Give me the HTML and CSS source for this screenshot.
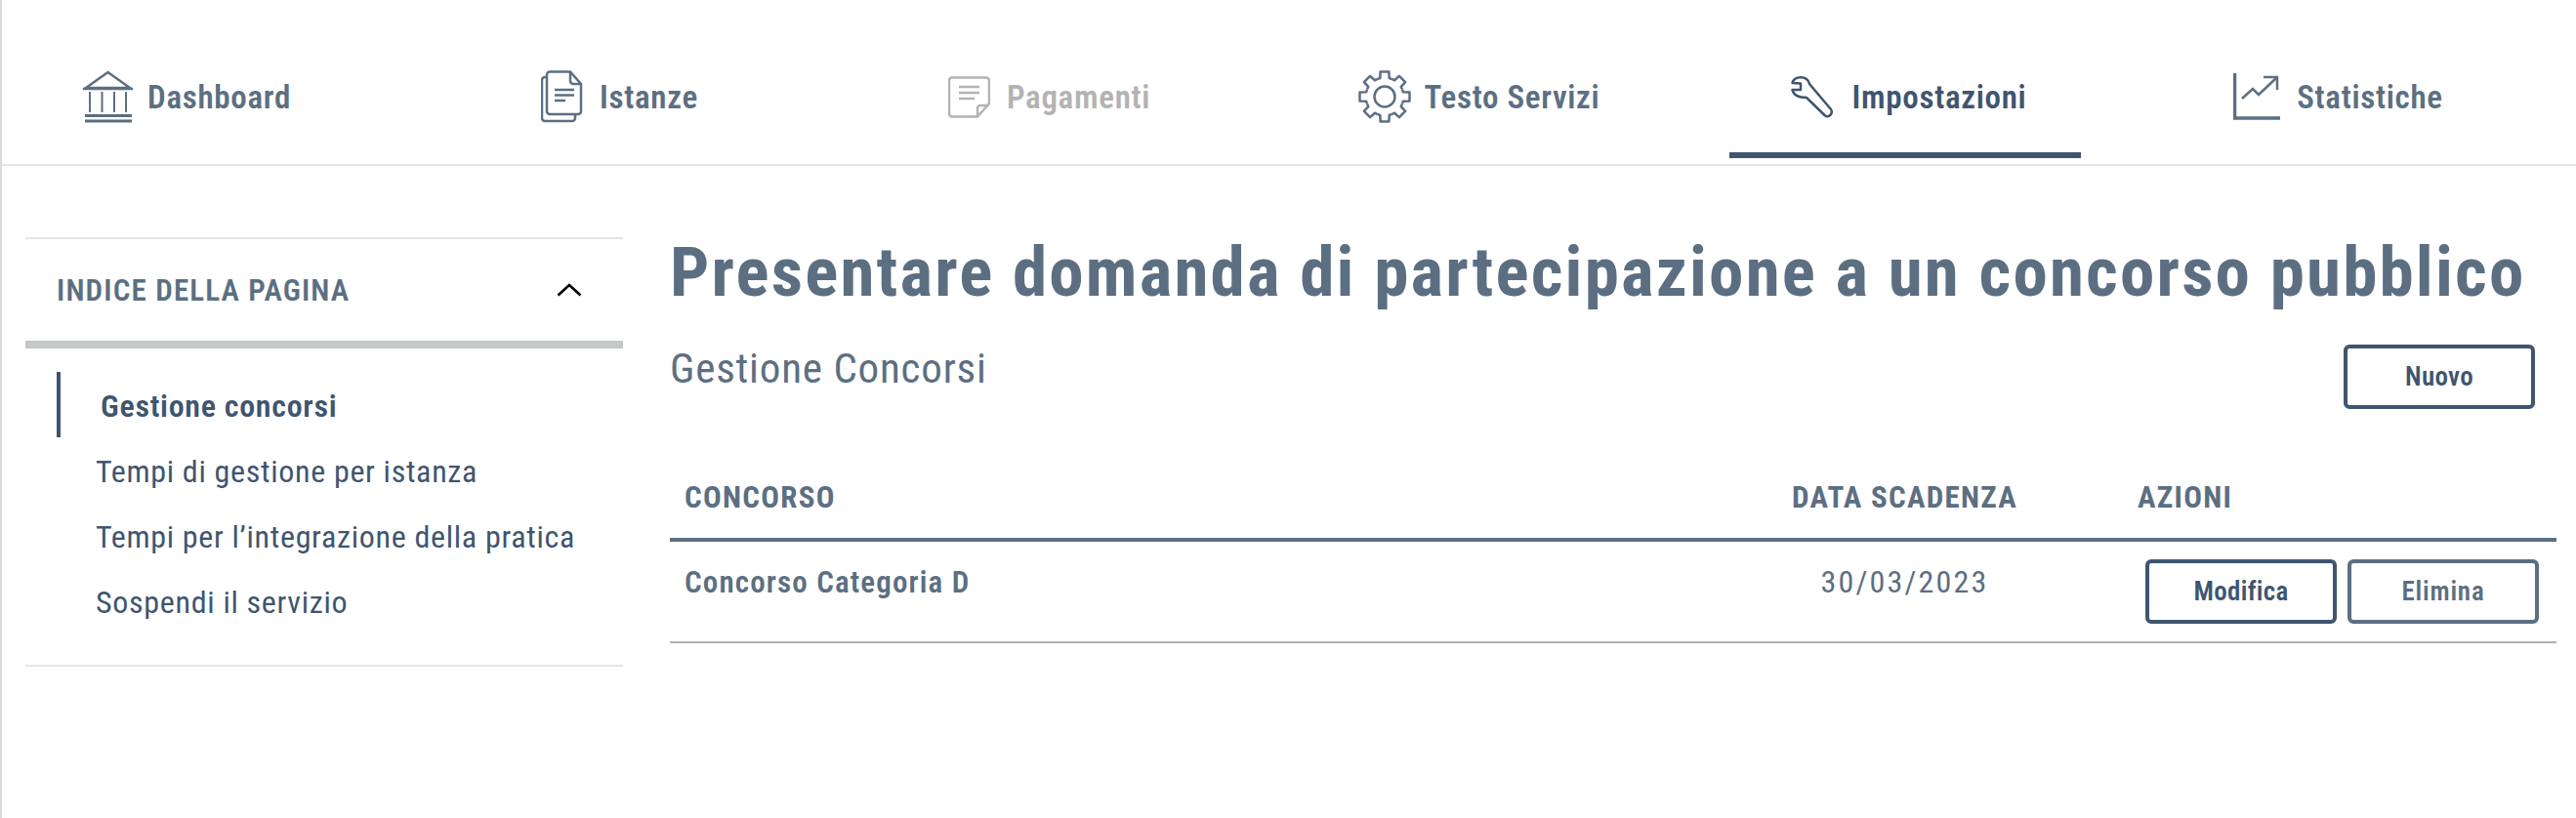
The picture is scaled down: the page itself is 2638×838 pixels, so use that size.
FILE: index.html
```html
<!DOCTYPE html>
<html lang="it">
<head>
<meta charset="utf-8">
<title>Impostazioni</title>
<link rel="stylesheet" href="styles.css">
</head>
<body>
<nav class="tabs">
  <a class="tab tab-first tab-gap-s">
    <svg class="icon" width="53" height="54" viewBox="0 0 53 54" fill="none" stroke="currentColor" stroke-width="2"><path d="M26.500 2 L49 18 H4 Z" stroke-width="2.500"/><path d="M1 19 H52" stroke-width="2.500"/><path d="M8 22 V43 M20.500 22 V43 M33 22 V43 M45 22 V43"/><path d="M3 46.500 H51 M3 52 H51" stroke-width="3"/></svg>
    <span>Dashboard</span>
  </a>
  <a class="tab tab-gap-m">
    <svg class="icon" width="43" height="54" viewBox="0 0 43 54" fill="none" stroke="currentColor" stroke-width="2.500"><path d="M9 1.500 H30 L41 14 V42 a3 3 0 0 1-3 3 H9 a3 3 0 0 1-3-3 V4.500 a3 3 0 0 1 3-3Z"/><path d="M30 1.500 V11 a3 3 0 0 0 3 3 H41"/><path d="M6 7 H4 a3 3 0 0 0-3 3 V49 a3 3 0 0 0 3 3 H32 a3 3 0 0 0 3-3 V45"/><path d="M14 20 H34 M14 25.500 H34 M14 31 H25"/></svg>
    <span>Istanze</span>
  </a>
  <a class="tab tab-off tab-gap-m">
    <svg class="icon" width="43" height="43" viewBox="0 0 43 43" fill="none" stroke="currentColor" stroke-width="2.500"><path d="M4 1.500 H39 a3 3 0 0 1 3 3 V28 L30 41.500 H4 a3 3 0 0 1-3-3 V4.500 a3 3 0 0 1 3-3Z"/><path d="M30 41 V33 a3 3 0 0 1 3-3 H42"/><path d="M11 11 H32 M11 17 H32 M11 23 H27"/></svg>
    <span>Pagamenti</span>
  </a>
  <a class="tab tab-gap-s">
    <svg class="icon" width="54" height="54" viewBox="-27 -27 54 54" fill="none" stroke="currentColor" stroke-width="2.500" stroke-linejoin="round"><defs><path id="tooth" d="M-7.460 -18.020 L-4.720 -18.920 L-4.400 -25.500 H4.400 L4.720 -18.920 L7.460 -18.020"/></defs><use href="#tooth"/><use href="#tooth" transform="rotate(45)"/><use href="#tooth" transform="rotate(90)"/><use href="#tooth" transform="rotate(135)"/><use href="#tooth" transform="rotate(180)"/><use href="#tooth" transform="rotate(225)"/><use href="#tooth" transform="rotate(270)"/><use href="#tooth" transform="rotate(315)"/><circle r="10.500"/></svg>
    <span>Testo Servizi</span>
  </a>
  <a class="tab tab-on tab-gap-l">
    <svg class="icon" width="43" height="43" viewBox="0 0 43 43" fill="none" stroke="currentColor" stroke-width="2.500" stroke-linejoin="round"><path d="M1.500 7 C2.500 3 6 1.300 10 1.300 C15 1.300 18 3.500 19 8 L41 34 C43.500 38.500 38.500 43.500 34.500 40 L16 22 C11 22 3 21 1.500 14 H10 V7.500 Z"/></svg>
    <span>Impostazioni</span>
  </a>
  <a class="tab tab-gap-m">
    <svg class="icon" width="48" height="48" viewBox="0 0 48 48" fill="none" stroke="currentColor" stroke-width="2.500"><path d="M1.500 0 V46 H48" stroke-width="3.500"/><path d="M9 26 L20 16 L26 22 L44 5"/><path d="M31 4 H45 V17"/></svg>
    <span>Statistiche</span>
  </a>
</nav>

<main class="page">
  <aside class="index">
    <header class="index-head">
      <span>INDICE DELLA PAGINA</span>
      <svg class="chevron" width="26" height="14" viewBox="0 0 26 14" fill="none" stroke="#000" stroke-width="2.600"><path d="M1.500 12.500 L13 2 L24.500 12.500"/></svg>
    </header>
    <ul class="index-list">
      <li class="index-item index-item-on">Gestione concorsi</li>
      <li class="index-item">Tempi di gestione per istanza</li>
      <li class="index-item">Tempi per l’integrazione della pratica</li>
      <li class="index-item">Sospendi il servizio</li>
    </ul>
  </aside>

  <section class="content">
    <h1 class="title">Presentare domanda di partecipazione a un concorso pubblico</h1>
    <div class="toolbar">
      <h2 class="subtitle">Gestione Concorsi</h2>
      <button class="btn btn-dark">Nuovo</button>
    </div>
    <div class="row row-head">
      <div class="cell-name">CONCORSO</div>
      <div class="cell-date">DATA SCADENZA</div>
      <div class="cell-head-actions">AZIONI</div>
    </div>
    <div class="row row-body">
      <div class="cell-name cell-strong">Concorso Categoria D</div>
      <div class="cell-date cell-light">30/03/2023</div>
      <div class="cell-actions">
        <button class="btn btn-dark">Modifica</button>
        <button class="btn btn-grey">Elimina</button>
      </div>
    </div>
  </section>
</main>
</body>
</html>
```
FILE: styles.css
```css
* { box-sizing: border-box; }
html, body { margin: 0; padding: 0; }
body {
  min-height: 838px;
  border-left: 2px solid #dcdcdc;
  background: #fff;
  font-family: "Roboto", "Liberation Sans", sans-serif;
  font-stretch: 75%;
  color: #5c6f82;
}
.tabs {
  display: grid;
  grid-template-columns: repeat(6, 360px);
  column-gap: 80px;
  height: 170px;
  padding-left: 9px;
  border-bottom: 2px solid #e3e4f0;
}
.tab {
  display: flex;
  align-items: center;
  justify-content: center;
  height: 162px;
  padding: 42px 0 0 7px;
  border-bottom: 6px solid transparent;
  font-size: 33px;
  letter-spacing: 0.7px;
  font-weight: 600;
  color: #5c6f82;
}
.tab-first { padding-left: 0; }
.tab-gap-s { gap: 14px; }
.tab-gap-m { gap: 17px; }
.tab-gap-l { gap: 20px; }
.tab-off { color: #b3b3b3; }
.tab-on { color: #3f5570; border-bottom-color: #3f5570; }
.icon { flex: none; }

.page {
  display: grid;
  grid-template-columns: 612px 1932px;
  column-gap: 48px;
  padding: 73px 0 0 24px;
}
.index { height: 440px; border-top: 2px solid #e6e6e6; border-bottom: 2px solid #e6e6e6; }
.index-head {
  display: flex;
  align-items: center;
  justify-content: space-between;
  height: 112px;
  padding: 0 42px 0 32px;
  border-bottom: 8px solid #c5c7c9;
  font-size: 31px;
  letter-spacing: 1.15px;
  font-weight: 600;
}
.chevron { flex: none; }
.index-list { list-style: none; margin: 0; padding: 24px 0 0 32px; }
.index-item {
  display: flex;
  align-items: center;
  height: 67px;
  padding: 2px 0 0 40px;
  font-size: 32px;
  letter-spacing: 0.7px;
  color: #3f5570;
}
.index-item-on { border-left: 4px solid #3f5570; padding-left: 41px; font-weight: 600; }

.content { min-width: 0; }
.title {
  margin: 0;
  font-size: 71px;
  line-height: 72px;
  letter-spacing: 2.2px;
  font-weight: 700;
  white-space: nowrap;
}
.toolbar {
  display: flex;
  align-items: flex-start;
  justify-content: space-between;
  margin-top: 38px;
  padding-right: 22px;
}
.subtitle { margin: 0; font-size: 43px; line-height: 48px; letter-spacing: 0.8px; font-weight: 400; }
.btn {
  width: 196px;
  height: 66px;
  padding: 0;
  background: #fff;
  border: 4px solid #3f5570;
  border-radius: 6px;
  font: inherit;
  font-stretch: 75%;
  font-size: 27px;
  letter-spacing: 0.3px;
  font-weight: 600;
  color: #3f5570;
}
.btn-grey { border-color: #5c6f82; color: #5c6f82; letter-spacing: 0.8px; }
.row { display: grid; grid-template-columns: 1134px 356px 1fr; }
.row-head {
  margin-top: 71px;
  padding-bottom: 21px;
  border-bottom: 4px solid #5c6f82;
  font-size: 31px;
  line-height: 40px;
  letter-spacing: 1.3px;
  font-weight: 700;
}
.row-body { height: 104px; padding-top: 18px; border-bottom: 2px solid #b1b1b1; }
.cell-name { padding-left: 15px; }
.cell-date { width: 261px; text-align: center; }
.cell-head-actions { padding-left: 13px; }
.cell-strong { font-size: 31px; letter-spacing: 1.15px; font-weight: 600; line-height: 48px; }
.cell-light { font-size: 32px; letter-spacing: 2.2px; font-weight: 400; line-height: 46px; }
.cell-actions { display: flex; gap: 11px; padding-left: 21px; }
```
